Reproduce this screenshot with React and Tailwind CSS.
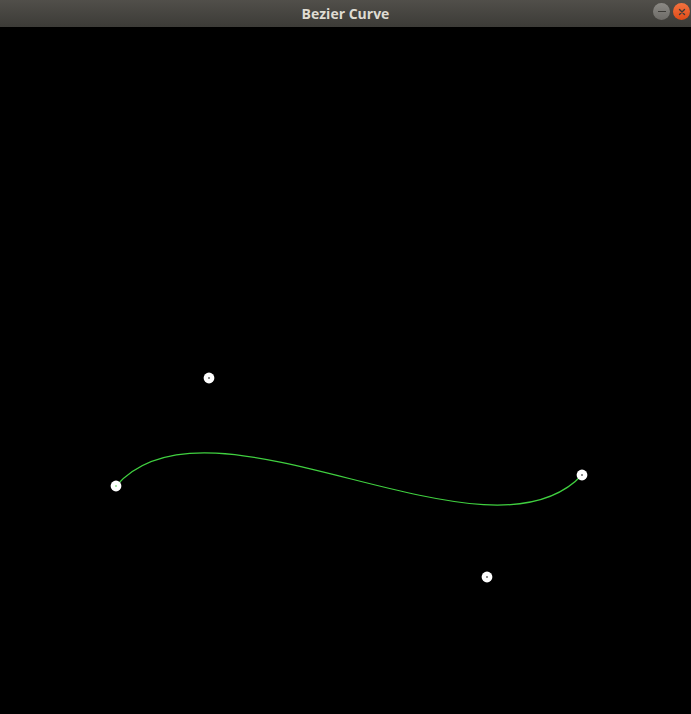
import React from 'react';

const points = [
    { x: 116, y: 459 },
    { x: 209, y: 351 },
    { x: 487, y: 550 },
    { x: 582, y: 448 },
];

const TitleBar = () => (
    <div className="relative h-[27px] flex items-center justify-center bg-gradient-to-b from-[#514f4a] to-[#3c3b37]">
        <span className="text-[14px] font-bold text-[#dfdbd2] font-['Open_Sans',sans-serif] leading-none">Bezier Curve</span>
        <div className="absolute right-[1px] top-[3px] flex gap-[3px]">
            <div className="w-[17px] h-[17px] rounded-full bg-gradient-to-b from-[#8c8a85] to-[#6d6b67] flex items-center justify-center">
                <div className="w-[8px] h-[1.5px] bg-[#3c3b37]" />
            </div>
            <div className="w-[17px] h-[17px] rounded-full bg-gradient-to-b from-[#f4733f] to-[#de4a15] flex items-center justify-center">
                <svg width="8" height="8" viewBox="0 0 8 8">
                    <path d="M1.5 1.5 L6.5 6.5 M6.5 1.5 L1.5 6.5" stroke="#3c3b37" strokeWidth="1.4" strokeLinecap="round" />
                </svg>
            </div>
        </div>
    </div>
);

export default function App() {
    const [p0, p1, p2, p3] = points;
    return (
        <div className="w-[691px] h-[714px] flex flex-col bg-black overflow-hidden">
            <TitleBar />
            <div className="flex-1 bg-black">
                <svg width="691" height="687" viewBox="0 0 691 687">
                    <path
                        d={`M${p0.x} ${p0.y} C${p1.x} ${p1.y}, ${p2.x} ${p2.y}, ${p3.x} ${p3.y}`}
                        fill="none"
                        stroke="#40d040"
                        strokeWidth="1.2"
                    />
                    {points.map((p, i) => (
                        <g key={i}>
                            <circle cx={p.x} cy={p.y} r="5.4" fill="#ffffff" />
                            <circle cx={p.x} cy={p.y} r="0.8" fill={i === 0 ? '#40d040' : '#000'} />
                        </g>
                    ))}
                </svg>
            </div>
        </div>
    );
}
